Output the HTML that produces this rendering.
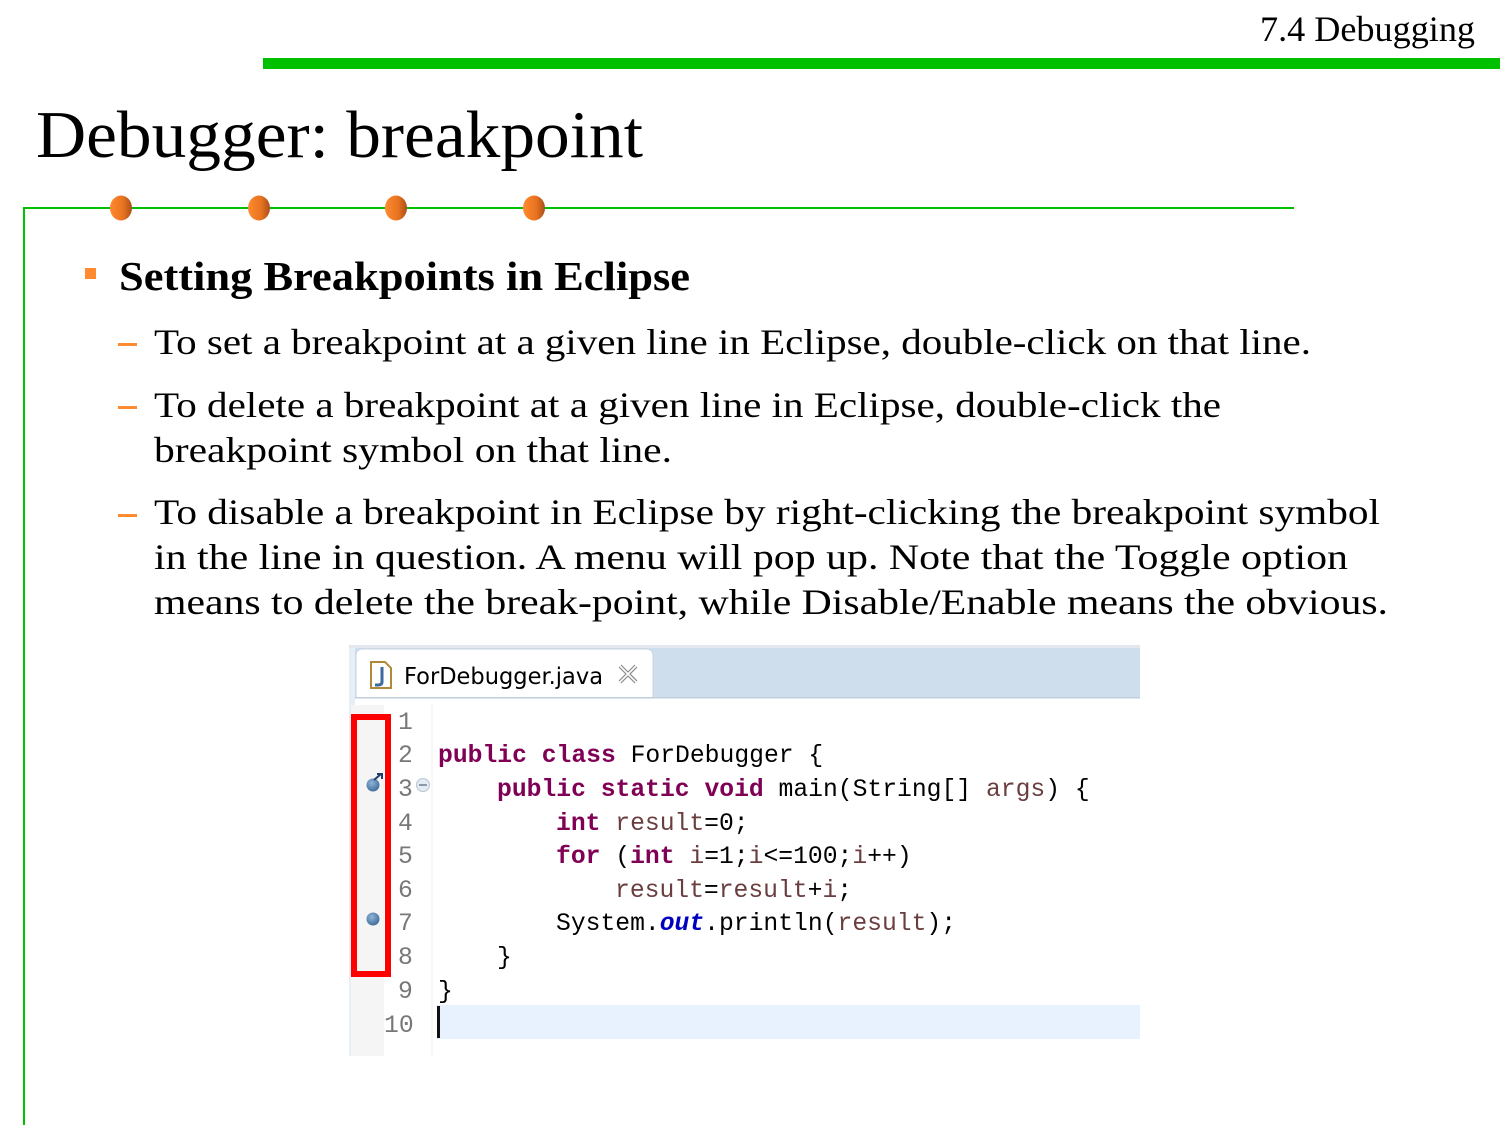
<!DOCTYPE html>
<html><head><meta charset="utf-8"><style>
html,body{margin:0;padding:0;background:#fff;width:1500px;height:1125px;overflow:hidden}
svg{display:block}
.s{font-family:"Liberation Serif",serif;fill:#000}
.m{font-family:"Liberation Mono","DejaVu Sans Mono",monospace;font-size:24.7px;fill:#000;white-space:pre}
.m text{white-space:pre}
.k{fill:#7f0055;font-weight:bold}
.v{fill:#6a3e3e}
.o{fill:#0000c0;font-weight:bold;font-style:italic}
.n{fill:#787878}
</style></head><body>
<svg width="1500" height="1125" viewBox="0 0 1500 1125" xmlns="http://www.w3.org/2000/svg">
<defs>
<linearGradient id="dot" x1="0" x2="1" y1="0" y2="0">
<stop offset="0" stop-color="#ff8a30"/><stop offset="0.6" stop-color="#e8731f"/><stop offset="1" stop-color="#a8501a"/>
</linearGradient>
<radialGradient id="bp" cx="0.4" cy="0.35" r="0.7"><stop offset="0" stop-color="#8fb4d8"/><stop offset="1" stop-color="#3d6a98"/></radialGradient>
</defs>
<text class="s" x="1260" y="41" font-size="36" textLength="215" lengthAdjust="spacingAndGlyphs">7.4 Debugging</text>
<rect x="263" y="58" width="1237" height="11" fill="#00c000"/>
<text class="s" x="36" y="157" font-size="67" textLength="607" lengthAdjust="spacingAndGlyphs">Debugger: breakpoint</text>
<rect x="24" y="207" width="1270" height="2" fill="#00c000"/>
<rect x="23" y="207" width="2" height="918" fill="#00c000"/>
<ellipse cx="121" cy="208" rx="11" ry="12.5" fill="url(#dot)"/>
<ellipse cx="259" cy="208" rx="11" ry="12.5" fill="url(#dot)"/>
<ellipse cx="396" cy="208" rx="11" ry="12.5" fill="url(#dot)"/>
<ellipse cx="534" cy="208" rx="11" ry="12.5" fill="url(#dot)"/>
<rect x="85" y="268" width="11" height="11" fill="#ff8a30"/>
<text class="s" x="119" y="290" font-size="41" font-weight="bold" textLength="571" lengthAdjust="spacingAndGlyphs">Setting Breakpoints in Eclipse</text>
<rect x="118" y="343" width="19" height="3" fill="#ff8a30"/>
<rect x="118" y="406" width="19" height="3" fill="#ff8a30"/>
<rect x="118" y="514" width="19" height="3" fill="#ff8a30"/>
<g class="s" font-size="36">
<text x="154" y="354" textLength="1157" lengthAdjust="spacingAndGlyphs">To set a breakpoint at a given line in Eclipse, double-click on that line.</text>
<text x="154" y="417" textLength="1067" lengthAdjust="spacingAndGlyphs">To delete a breakpoint at a given line in Eclipse, double-click the</text>
<text x="154" y="462" textLength="518" lengthAdjust="spacingAndGlyphs">breakpoint symbol on that line.</text>
<text x="154" y="524" textLength="1226" lengthAdjust="spacingAndGlyphs">To disable a breakpoint in Eclipse by right-clicking the breakpoint symbol</text>
<text x="154" y="569" textLength="1194" lengthAdjust="spacingAndGlyphs">in the line in question.  A menu will pop up. Note that the Toggle option</text>
<text x="154" y="614" textLength="1234" lengthAdjust="spacingAndGlyphs">means to delete the break-point, while Disable/Enable means the obvious.</text>
</g>
<!-- editor -->
<rect x="349" y="645" width="791" height="3" fill="#e4e8ee"/>
<rect x="349" y="648" width="791" height="50" fill="#cfdeec"/>
<rect x="349" y="648" width="6" height="408" fill="#e8eef5"/>
<path d="M356 698 V656 Q356 649 363 649 H646 Q653 649 653 656 V698 Z" fill="#fff" stroke="#c8d4e2"/>
<rect x="355" y="697" width="785" height="1.5" fill="#c0cede"/>
<rect x="355" y="699" width="785" height="357" fill="#fff"/>
<rect x="351" y="705" width="33" height="351" fill="#f5f5f5"/>
<rect x="431" y="705" width="2" height="351" fill="#f7f7f7"/>
<!-- file icon -->
<path d="M371 662 H385 L391 668 V688 H371 Z" fill="#fff" stroke="#b08a3a" stroke-width="2"/>
<path d="M382 667 V682 Q382 685 378 685 H375" fill="none" stroke="#3d6a9e" stroke-width="3"/>
<text x="404" y="684" font-family="'DejaVu Sans',sans-serif" font-size="23" fill="#000" textLength="199" lengthAdjust="spacingAndGlyphs">ForDebugger.java</text>
<path d="M620 666 L636 682 M636 666 L620 682" stroke="#8a8a8a" stroke-width="4"/>
<path d="M620 666 L636 682 M636 666 L620 682" stroke="#fff" stroke-width="1.6"/>
<rect x="437" y="1005" width="703" height="34" fill="#e8f2fe"/>
<rect x="437" y="1006" width="3" height="32" fill="#111"/>
<!-- line numbers -->
<g class="m n">
<text x="398" y="729">1</text><text x="398" y="762">2</text><text x="398" y="796">3</text>
<text x="398" y="830">4</text><text x="398" y="863">5</text><text x="398" y="897">6</text>
<text x="398" y="930">7</text><text x="398" y="964">8</text><text x="398" y="998">9</text>
<text x="384" y="1032">10</text>
</g>
<circle cx="423" cy="785" r="6.5" fill="#e4ebf2" stroke="#b6c4d2"/>
<rect x="419" y="784" width="8" height="2" fill="#8a9aaa"/>
<g class="m">
<text x="438" y="762"><tspan class="k">public</tspan> <tspan class="k">class</tspan> ForDebugger {</text>
<text x="497" y="796"><tspan class="k">public</tspan> <tspan class="k">static</tspan> <tspan class="k">void</tspan> main(String[] <tspan class="v">args</tspan>) {</text>
<text x="556" y="830"><tspan class="k">int</tspan> <tspan class="v">result</tspan>=0;</text>
<text x="556" y="863"><tspan class="k">for</tspan> (<tspan class="k">int</tspan> <tspan class="v">i</tspan>=1;<tspan class="v">i</tspan>&lt;=100;<tspan class="v">i</tspan>++)</text>
<text x="615" y="897"><tspan class="v">result</tspan>=<tspan class="v">result</tspan>+<tspan class="v">i</tspan>;</text>
<text x="556" y="930">System.<tspan class="o">out</tspan>.println(<tspan class="v">result</tspan>);</text>
<text x="497" y="964">}</text>
<text x="438" y="998">}</text>
</g>
<!-- breakpoints -->
<circle cx="373" cy="785" r="6.5" fill="url(#bp)"/>
<path d="M374 780 L381 774 M377 774 H382 V779" stroke="#1e3f6a" stroke-width="2" fill="none"/>
<circle cx="373" cy="919" r="6.5" fill="url(#bp)"/>
<rect x="354" y="717" width="34" height="257" fill="none" stroke="#ff0000" stroke-width="6"/>
</svg>
</body></html>
